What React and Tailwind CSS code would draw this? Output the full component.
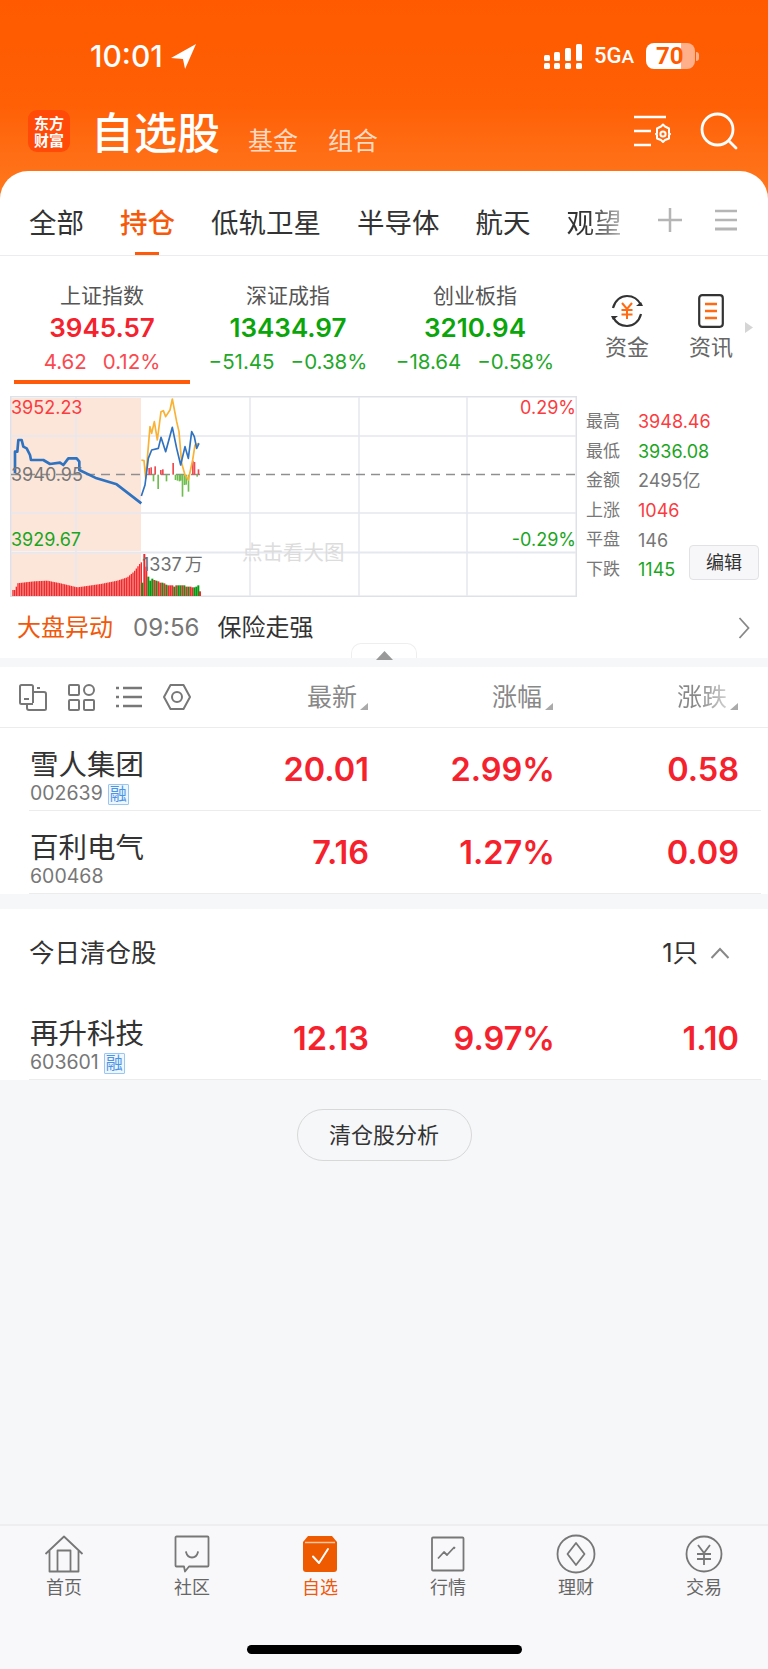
import React from "react";

const lerp = (pts, x) => {
  for (let i = 0; i < pts.length - 1; i++) {
    const [a, b] = pts[i];
    const [c, d] = pts[i + 1];
    if (x >= a && x <= c) return b + ((d - b) * (x - a)) / (c - a);
  }
  return pts[pts.length - 1][1];
};

const morningTop = [[37,600],[46,600],[48,580],[100,574],[140,572],[180,580],[230,592],[300,582],[350,572],[380,562],[400,545],[420,518],[424,516]];
const morningBars = [];
for (let x = 37; x < 423; x += 5) morningBars.push([x, lerp(morningTop, x)]);
const pmBars = [
  [424,578,"g"],[430,492,"r"],[436,530,"r"],[442,560,"g"],[448,572,"g"],[454,566,"g"],[460,570,"r"],[466,572,"g"],[472,574,"r"],[478,578,"r"],[484,578,"g"],[490,580,"r"],[496,584,"g"],[502,586,"r"],[508,586,"r"],[514,586,"r"],[520,590,"g"],[526,586,"r"],[532,586,"g"],[538,586,"g"],[544,586,"r"],[550,586,"g"],[556,590,"r"],[562,590,"g"],[568,590,"r"],[574,592,"r"],[580,592,"g"],[586,590,"g"],[592,586,"g"],[597,604,"r"],
];
const redUp = [[445,234],[451,232],[463,229],[480,240],[486,238],[517,219],[576,212],[581,216],[593,238]];
const greenDown = [[458,274],[472,297],[497,274],[524,270],[530,272],[536,274],[540,272],[545,320],[551,285],[556,284],[563,305],[589,260]];
const blueA = "45,250 45,185 52,185 55,150 65,150 70,170 80,175 90,195 93,210 130,210 150,222 180,218 190,225 205,205 230,205 238,215 238,240 290,265 350,283 424,340";
const blueB = "424,318 435,285 445,205 455,180 475,175 483,142 497,185 517,112 530,175 542,225 555,170 565,205 575,125 583,140 590,175 597,160";
const orange = "424,210 432,212 437,265 450,110 455,130 463,95 472,150 483,65 490,62 497,80 510,60 517,27 530,95 537,125 545,220 555,255 565,270 578,210 585,165 597,160";

function Chart() {
  return (
    <div className="relative w-[567px] h-[201px] ml-[10px] shrink-0 overflow-hidden">
      <svg width="567" height="201" viewBox="0 0 567 201" className="absolute left-0 top-0">
        <rect x="1" y="2" width="130" height="153" fill="#fce6da" />
        <rect x="1" y="157" width="130" height="43" fill="#fce6da" />
        <g stroke="#e6e8ef" strokeWidth="1.5" fill="none">
          <rect x="0.75" y="0.75" width="565.5" height="199.5" stroke="#dfe1e8" />
          <path d="M66 1V200M240 1V200M349 1V200M457 1V200" />
          <path d="M1 40H566M1 117H566" />
          <path d="M1 156.5H566" strokeWidth="2" />
        </g>
        <path d="M1 78.5H566" stroke="#8f8f8f" strokeWidth="1.5" strokeDasharray="9 6" fill="none" />
        <g transform="translate(-10 -6) scale(0.33333)">
          {morningBars.map(([x, y]) => (
            <rect key={x} x={x} y={y} width="4" height={618 - y} fill="#f02a2e" />
          ))}
          {pmBars.map(([x, y, c]) => (
            <rect key={x} x={x} y={y} width="6" height={618 - y} fill={c === "r" ? "#f02a2e" : "#059a12"} />
          ))}
          {redUp.map(([x, y]) => (
            <rect key={x} x={x} y={y} width="5" height={254 - y} fill="#ee4a50" />
          ))}
          {greenDown.map(([x, y]) => (
            <rect key={x} x={x} y={254} width="5" height={y - 254} fill="#6fbd4f" />
          ))}
          <polyline points={orange} fill="none" stroke="#f9b233" strokeWidth="5" strokeLinejoin="round" />
          <polyline points={blueB} fill="none" stroke="#2f72c0" strokeWidth="5" strokeLinejoin="round" />
          <polyline points={blueA} fill="none" stroke="#2f72c0" strokeWidth="8" strokeLinejoin="round" />
        </g>
      </svg>
      <span className="absolute left-[1px] top-[1px] text-[18px] leading-[22px] text-[#fa3b40]">3952.23</span>
      <span className="absolute left-[1px] top-[68px] text-[18px] leading-[22px] text-[#777777]">3940.95</span>
      <span className="absolute left-[1px] top-[133px] text-[18px] leading-[22px] text-[#1ba51e]">3929.67</span>
      <span className="absolute right-[1px] top-[1px] text-[18px] leading-[22px] text-[#fa3b40]">0.29%</span>
      <span className="absolute right-[1px] top-[133px] text-[18px] leading-[22px] text-[#1ba51e]">-0.29%</span>
      <span className="absolute left-[232px] top-[144px] text-[20.5px] leading-[26px] text-[#dcdcdc]">点击看大图</span>
      <span className="absolute left-[132px] top-[158px] text-[18px] leading-[22px] text-[#6f6f6f]">1337<span className="ml-[3px]">万</span></span>
    </div>
  );
}

function Stat({ label, value, color }) {
  return (
    <div className="flex items-center h-[29.6px]">
      <span className="w-[52px] shrink-0 text-[17px] text-[#777777]">{label}</span>
      <span className={`text-[18px] ${color}`}>{value}</span>
    </div>
  );
}

function Index({ w, label, value, a, b, color, subColor, active }) {
  return (
    <div className={`flex flex-col items-center shrink-0 ${w}`}>
      <div className="h-[26px] leading-[26px] text-[21px] text-[#555555]">{label}</div>
      <div className={`mt-[1px] h-[36px] leading-[36px] text-[26px] font-semibold ${color}`}>{value}</div>
      <div className={`h-[32px] leading-[32px] text-[20.500px] flex gap-[16px] ${subColor}`}>
        <span>{a}</span>
        <span>{b}</span>
      </div>
      <div className={`w-full h-[4px] mt-[2px] ${active ? "bg-[#ff5a0a]" : ""}`} />
    </div>
  );
}

function Rong() {
  return (
    <span className="ml-[5px] w-[21px] h-[21px] flex items-center justify-center border border-[#9cc6f2] bg-[#eef6fe] text-[#4b93e6] text-[17px] leading-none rounded-[1px]">融</span>
  );
}

function Row({ name, code, rong, p, q, r }) {
  return (
    <div className="relative flex h-[83px] bg-white shrink-0">
      <div className="w-[184px] pl-[30px] shrink-0">
        <div className="h-[36px] mt-[19px] leading-[36px] text-[28.5px] text-[#333333] whitespace-nowrap">{name}</div>
        <div className="flex items-center h-[22px] text-[19.5px] text-[#777777]">
          <span>{code}</span>
          {rong && <Rong />}
        </div>
      </div>
      <div className="w-[185px] shrink-0 text-right pt-[24px] leading-[36px] text-[32.5px] font-semibold text-[#f5222d]">{p}</div>
      <div className="w-[186px] shrink-0 text-right pt-[24px] leading-[36px] text-[32.5px] font-semibold text-[#f5222d]">{q}</div>
      <div className="w-[184px] shrink-0 text-right pt-[24px] leading-[36px] text-[32.5px] font-semibold text-[#f5222d]">{r}</div>
      <div className="absolute left-[29px] right-[7px] bottom-0 h-[1.5px] bg-[#ececec]" />
    </div>
  );
}

const navIcons = [
  <svg key="h" width="40" height="38" viewBox="0 0 40 38" fill="none" stroke="#777" strokeWidth="1.8" strokeLinejoin="round"><path d="M1.5 19 20 1.5 38.5 19M5.5 16v20.5h29V16M13.5 36.5V15.5h13v21" /></svg>,
  <svg key="c" width="36" height="38" viewBox="0 0 36 38" fill="none" stroke="#777" strokeWidth="1.8" strokeLinejoin="round"><path d="M2.5 1.5h31a1 1 0 0 1 1 1v28a1 1 0 0 1-1 1H15l-4 5-1-5H2.5a1 1 0 0 1-1-1v-28a1 1 0 0 1 1-1Z" /><path d="M12 17c1 4 3.500 5.500 6 5.500s5-1.500 6-5.500" strokeLinecap="round" /></svg>,
  <svg key="o" width="34" height="36" viewBox="0 0 34 36" fill="none"><path d="M5 0h24l5 6v27a3 3 0 0 1-3 3H3a3 3 0 0 1-3-3V6Z" fill="#ee5a00" /><path d="M2 6.500h30" stroke="#f9c7a6" strokeWidth="1.5" /><path d="M10 20.500l6 6.500 9-14" stroke="#fff" strokeWidth="2" strokeLinecap="round" strokeLinejoin="round" /></svg>,
  <svg key="l" width="34" height="36" viewBox="0 0 34 36" fill="none" stroke="#777" strokeWidth="1.8"><rect x="1" y="1.500" width="31.500" height="33" rx="1" /><path d="M7 22.500l6-6.500 3 3 7-7.500 1 1" strokeLinejoin="round" /></svg>,
  <svg key="d" width="40" height="40" viewBox="0 0 40 40" fill="none" stroke="#777" strokeWidth="1.8"><circle cx="20" cy="20" r="18.500" /><path d="M20 9l8.500 11L20 31l-8.500-11Z" strokeLinejoin="round" /></svg>,
  <svg key="y" width="38" height="40" viewBox="0 0 38 40" fill="none" stroke="#777" strokeWidth="1.8"><circle cx="19" cy="20" r="17.500" /><path d="M13 11l6 8 6-8M12 20h14M12 25h14M19 19v12" /></svg>,
];
const navLabels = ["首页", "社区", "自选", "行情", "理财", "交易"];

const cjk = { fontFamily: 'Inter, "Noto Sans CJK SC", sans-serif' };

export default function App() {
  return (
    <div className="w-[768px] h-[1669px] flex flex-col bg-[#f6f7f9] overflow-hidden" style={cjk}>
      {/* Header + tabs */}
      <div className="bg-gradient-to-b from-[#ff5a00] via-[#ff5f05] to-[#ff7a1e] h-[255px] shrink-0 flex flex-col bg-[length:100%_205px] bg-no-repeat">
        <div className="flex items-center h-[26px] mt-[43px] pl-[90px] pr-[69px] text-white">
          <span className="text-[30px] leading-[26px] font-medium">10:01</span>
          <svg width="25" height="25" viewBox="0 0 24 24" className="ml-[8px]"><path d="M24 0 0 13.500l11.500 1L13.500 24Z" fill="#fff" /></svg>
          <div className="ml-auto flex items-end gap-[3px] h-[26px]">
            <svg width="38" height="25" viewBox="0 0 38 25" fill="#fff">
              <rect x="0" y="11" width="6" height="6" rx="1.500" /><rect x="0" y="19" width="6" height="6" rx="1.500" />
              <rect x="10" y="8" width="6" height="9" rx="1.500" /><rect x="10" y="19" width="6" height="6" rx="1.500" />
              <rect x="21" y="4" width="6" height="13" rx="1.500" /><rect x="21" y="19" width="6" height="6" rx="1.500" />
              <rect x="32" y="0" width="6" height="17" rx="1.500" /><rect x="32" y="19" width="6" height="6" rx="1.500" />
            </svg>
          </div>
          <span className="ml-[12px] text-[22px] font-medium leading-[26px]" style={{ fontFamily: "Roboto, sans-serif" }}>5G<span className="text-[19px]">A</span></span>
          <div className="ml-[12px] relative w-[49px] h-[26px] rounded-[8px] bg-[linear-gradient(90deg,#ffffff_35px,#ffb08a_35px)]">
            <span className="absolute left-[10px] top-0 text-[24px] leading-[26px] font-bold text-[#ff5a00]" style={{ fontFamily: "Roboto, sans-serif" }}>70</span>
          </div>
          <div className="ml-[1px] w-[3px] h-[9px] rounded-r-full bg-[#ffb08a]" />
        </div>
        <div className="flex items-center h-[42px] mt-[41px] pl-[28px] pr-[30px] text-white" style={{ fontFamily: '"Noto Sans CJK SC", sans-serif' }}>
          <div className="w-[42px] h-[42px] rounded-[9px] bg-[#ff4a08] flex items-center justify-center text-[15px] leading-[17px] font-bold text-center">
            <span className="w-[30px] break-all">东方财富</span>
          </div>
          <span className="ml-[21px] -mt-[3px] text-[43px] leading-[44px] font-medium">自选股</span>
          <span className="ml-[28px] mt-[16px] text-[25px] leading-[30px] text-white/75">基金</span>
          <span className="ml-[30px] mt-[16px] text-[25px] leading-[30px] text-white/75">组合</span>
          <svg width="38" height="32" viewBox="0 0 38 32" fill="none" stroke="#fff" strokeWidth="2.500" className="ml-auto mr-[29px]">
            <path d="M1 2h32M1 16h17M1 30h17" />
            <path d="M24 13.500l4-2 2-2 2 2 4 2v4.500l1 1-1 1v3.500l-4 1.500-2 2-2-2-4-1.500v-3.500l-1-1 1-1Z" strokeWidth="2" strokeLinejoin="round" />
            <circle cx="30" cy="19" r="2.600" strokeWidth="2" />
          </svg>
          <svg width="38" height="38" viewBox="0 0 38 38" fill="none" stroke="#fff" strokeWidth="2.800" strokeLinecap="round"><circle cx="17.500" cy="17.500" r="15.500" /><path d="M29 29l7 7" /></svg>
        </div>
        <div className="mt-[19px] flex-1 bg-white rounded-t-[28px] flex items-start pl-[29px] gap-[36px] relative text-[27.500px] leading-[36px] text-[#333333] pt-[32px]" style={{ fontFamily: '"Noto Sans CJK SC", sans-serif' }}>
          <span>全部</span>
          <span className="relative text-[#f4590c] font-medium">持仓<span className="absolute left-[15px] top-[49px] w-[24px] h-[3px] bg-[#ff5a0a]" /></span>
          <span className="whitespace-nowrap">低轨卫星</span>
          <span>半导体</span>
          <span>航天</span>
          <span className="bg-gradient-to-r from-[#333333] from-40% to-[#bdbdbd] bg-clip-text text-transparent">观望</span>
          <svg width="24" height="24" viewBox="0 0 24 24" stroke="#b5b5b5" strokeWidth="2.500" className="absolute left-[658px] top-[37px]"><path d="M12 0v24M0 12h24" /></svg>
          <svg width="22" height="22" viewBox="0 0 22 22" stroke="#b5b5b5" strokeWidth="2.500" className="absolute left-[715px] top-[38px]"><path d="M0 2h22M0 11h22" /><path d="M0 20h22" strokeWidth="3" /></svg>
        </div>
      </div>

      {/* Index */}
      <div className="bg-white border-t border-[#ececf0] flex pt-[27px] h-[141px] shrink-0 pl-[14px]">
        <Index w="w-[176px]" label="上证指数" value="3945.57" a="4.62" b="0.12%" color="text-[#f5222d]" subColor="text-[#fa4a50]" active />
        <Index w="w-[196px]" label="深证成指" value="13434.97" a="−51.45" b="−0.38%" color="text-[#0aa50a]" subColor="text-[#22a828]" />
        <Index w="w-[178px]" label="创业板指" value="3210.94" a="−18.64" b="−0.58%" color="text-[#0aa50a]" subColor="text-[#22a828]" />
        <div className="ml-[21px] flex w-[168px] mt-[11px]">
          <div className="w-[84px] flex flex-col items-center">
            <svg width="34" height="34" viewBox="0 0 34 34" fill="none">
              <path d="M3 14C5 6 11 2 17 2c6 0 11 3 14 9M31 20c-2 8-8 12-14 12-6 0-11-3-14-9" stroke="#333" strokeWidth="2.200" />
              <path d="M26 12h7l-2-4ZM8 22H1l2 4Z" fill="#333" />
              <path d="M12 9l5 6 5-6M11.500 16h11M11.500 20.500h11M17 15v10" stroke="#ff6a13" strokeWidth="2" />
            </svg>
            <span className="mt-[5px] text-[22px] leading-[28px] text-[#666666]">资金</span>
          </div>
          <div className="w-[84px] flex flex-col items-center">
            <svg width="26" height="34" viewBox="0 0 26 34" fill="none">
              <rect x="1.200" y="1.200" width="23.600" height="31.600" rx="3" stroke="#333" strokeWidth="2.200" />
              <path d="M7 10h12M7 17h12M7 24h12" stroke="#ff6a13" strokeWidth="2.400" />
            </svg>
            <span className="mt-[5px] text-[22px] leading-[28px] text-[#666666]">资讯</span>
          </div>
          <svg width="8" height="11" viewBox="0 0 8 11" className="-ml-[8px] mt-[28px]"><path d="M0 0l8 5.500L0 11Z" fill="#d5d5d5" /></svg>
        </div>
      </div>

      {/* Chart and stats */}
      <div className="bg-white flex h-[201px] shrink-0">
        <Chart />
        <div className="flex-1 flex pl-[9px] pr-[9px]">
          <div className="pt-[11px] whitespace-nowrap w-[103px] shrink-0">
            <Stat label="最高" value="3948.46" color="text-[#fa3b40]" />
            <Stat label="最低" value="3936.08" color="text-[#1ba51e]" />
            <Stat label="金额" value="2495亿" color="text-[#777777]" />
            <Stat label="上涨" value="1046" color="text-[#fa3b40]" />
            <Stat label="平盘" value="146" color="text-[#777777]" />
            <Stat label="下跌" value="1145" color="text-[#1ba51e]" />
          </div>
          <div className="self-end mb-[17px] w-[70px] h-[35px] shrink-0 flex items-center justify-center border border-[#e2e2e6] bg-[#f7f7f9] rounded-[4px] text-[18px] text-[#333333]">编辑</div>
        </div>
      </div>

      {/* Notice */}
      <div className="relative bg-white h-[61px] shrink-0 flex items-center pl-[17px] text-[24px]">
        <span className="text-[#f0590c]">大盘异动</span>
        <span className="ml-[20px] text-[#777777]">09:56</span>
        <span className="ml-[18px] text-[#333333]">保险走强</span>
        <svg width="12" height="24" viewBox="0 0 12 24" fill="none" stroke="#888" strokeWidth="1.800" className="ml-auto mr-[18px]"><path d="M1.500 2l9 10-9 10" /></svg>
        <div className="absolute left-[351px] bottom-0 w-[66px] h-[15px] bg-white border border-b-0 border-[#eeeeee] rounded-t-[10px] flex justify-center">
          <svg width="17" height="9" viewBox="0 0 17 9" className="mt-[7px]"><path d="M8.500 0 17 9H0Z" fill="#999" /></svg>
        </div>
      </div>
      <div className="h-[9px] shrink-0 bg-[#f6f7f9]" />

      {/* Toolbar */}
      <div className="bg-white h-[61px] shrink-0 border-b border-[#ececec] flex items-center relative">
        <div className="w-[183px] shrink-0 pl-[19px] flex items-center gap-[21px]">
          <svg width="28" height="27" viewBox="0 0 28 27" fill="none" stroke="#777" strokeWidth="2" className="shrink-0"><path d="M14 19V2.500a1.500 1.500 0 0 0-1.500-1.500H2.500A1.500 1.500 0 0 0 1 2.500v16A1.500 1.500 0 0 0 2.500 20H14" /><path d="M14 8h11a2 2 0 0 1 2 2v14.500a1.500 1.500 0 0 1-1.500 1.500H10a2 2 0 0 1-2-2v-4" /><path d="M5 15h5M18 4l3 0" /></svg>
          <svg width="27" height="27" viewBox="0 0 27 27" fill="none" stroke="#777" strokeWidth="2" className="shrink-0"><rect x="1" y="1" width="10" height="10" rx="1" /><circle cx="21" cy="6" r="5" /><rect x="1" y="16" width="10" height="10" rx="1" /><rect x="16" y="16" width="10" height="10" rx="1" /></svg>
          <svg width="26" height="22" viewBox="0 0 26 22" fill="none" stroke="#777" strokeWidth="2.400" className="shrink-0"><path d="M7 2h19M7 11h19M7 20h19M0 2h3M0 11h3M0 20h3" /></svg>
          <svg width="28" height="26" viewBox="0 0 28 26" fill="none" stroke="#777" strokeWidth="2" className="shrink-0"><path d="M7.500 1h13L27 13l-6.500 12h-13L1 13Z" strokeLinejoin="round" /><circle cx="14" cy="13" r="5" /></svg>
        </div>
        {["最新", "涨幅", "涨跌"].map((t, i) => (
          <div key={t} className="w-[185px] shrink-0 flex items-center justify-end relative text-[25px] leading-[30px] text-[#888888]">
            {i === 2 ? <span className="bg-gradient-to-r from-[#888888] from-40% to-[#d0d0d0] bg-clip-text text-transparent">{t}</span> : <span>{t}</span>}
            <svg width="8" height="7" viewBox="0 0 8 7" className="ml-[3px] mt-[18px]"><path d="M8 0v7H0Z" fill="#aaa" /></svg>
          </div>
        ))}
      </div>

      {/* Rows */}
      <Row name="雪人集团" code="002639" rong p="20.01" q="2.99%" r="0.58" />
      <Row name="百利电气" code="600468" p="7.16" q="1.27%" r="0.09" />
      <div className="h-[15px] shrink-0" />

      {/* Cleared */}
      <div className="bg-white h-[88px] shrink-0 flex items-center pl-[29px] pr-[38px] text-[25.500px] text-[#333333]">
        <span>今日清仓股</span>
        <span className="ml-auto">1只</span>
        <svg width="20" height="12" viewBox="0 0 20 12" fill="none" stroke="#888" strokeWidth="2" className="ml-[12px]"><path d="M1.500 11 10 2l8.500 9" /></svg>
      </div>
      <Row name="再升科技" code="603601" rong p="12.13" q="9.97%" r="1.10" />

      {/* Main bottom */}
      <div className="flex-1 pt-[29px] flex justify-center">
        <div className="w-[175px] h-[52px] rounded-[26px] border border-[#d8d8d8] flex items-center justify-center text-[22px] text-[#333333]">清仓股分析</div>
      </div>

      {/* Nav */}
      <div className="h-[145px] shrink-0 bg-[#f8f8fb] border-t-2 border-[#eeeef1] flex flex-col">
        <div className="grid grid-cols-6 pt-[7px]">
          {navLabels.map((l, i) => (
            <div key={l} className="flex flex-col items-center">
              <div className="h-[42px] flex items-center justify-center">{navIcons[i]}</div>
              <span className={`text-[18px] leading-[26px] ${i === 2 ? "text-[#f0590c]" : "text-[#666666]"}`}>{l}</span>
            </div>
          ))}
        </div>
        <div className="mt-[44px] mx-auto w-[275px] h-[9px] rounded-full bg-black" />
      </div>
    </div>
  );
}
